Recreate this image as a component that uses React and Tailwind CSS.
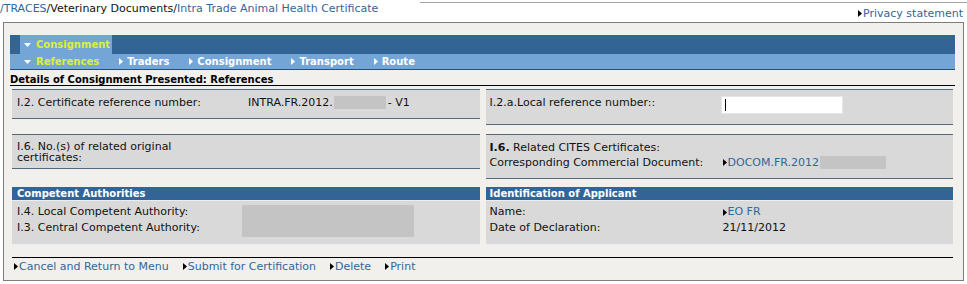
import React from "react";

const Arrow = ({ color = "#000", className = "" }) => (
  <svg width="4" height="7" viewBox="0 0 4 7" className={className}>
    <path d="M0 0L4 3.5L0 7Z" fill={color} />
  </svg>
);

const Down = ({ color = "#fff", className = "" }) => (
  <svg width="7" height="4" viewBox="0 0 7 4" className={className}>
    <path d="M0 0L7 0L3.5 4Z" fill={color} />
  </svg>
);

const Link = ({ children, className = "" }) => (
  <span className={`flex items-center text-[#336699] ${className}`}>
    <Arrow className="mr-[1px]" />
    {children}
  </span>
);

const Blur = ({ className = "" }) => (
  <span className={`block bg-[#c4c4c4] ${className}`} />
);

const navItems = ["Traders", "Consignment", "Transport", "Route"];

const App = () => {
  return (
    <div className="w-[967px] h-[284px] bg-white overflow-hidden font-['DejaVu_Sans',sans-serif] text-[11px] leading-[13px] text-[#111]">
      {/* top strip */}
      <div className="h-[22px] flex flex-col">
        <div className="h-[3px] ml-[420px] border-b border-[#a3a3a3]" />
        <div className="flex justify-between items-start">
          <div className="leading-[12px]">
            <span className="text-[#336699]">/TRACES</span>
            <span>/Veterinary Documents/</span>
            <span className="text-[#336699]">Intra Trade Animal Health Certificate</span>
          </div>
          <div className="mt-[4px] mr-[4px] flex items-center text-[#336699]">
            <Arrow className="mr-[1px]" />
            Privacy statement
          </div>
        </div>
      </div>

      {/* main panel */}
      <div className="mx-[3px] h-[259px] border border-[#7d7d7d] bg-[#f1f0ed] pl-[6px] pr-[8px] pt-[12px]">
        {/* tabs */}
        <div className="h-[19px] bg-[#326496] pl-[10px] flex">
          <div className="w-[92px] bg-[#73a6d6] flex items-center pl-[4px] text-[10px] font-bold text-[#ddf035]">
            <Down className="mr-[5px]" />
            Consignment
          </div>
        </div>
        <div className="h-[16px] bg-[#73a6d6] border-b border-[#2a4e72] flex items-center pl-[14px] gap-[20px] text-[10px] font-bold text-white">
          <span className="flex items-center text-[#ddf035]">
            <Down className="mr-[5px]" />
            References
          </span>
          {navItems.map((item) => (
            <span key={item} className="flex items-center">
              <Arrow color="#fff" className="mr-[4px]" />
              {item}
            </span>
          ))}
        </div>

        {/* title */}
        <div className="h-[16px] border-b border-black pt-[4px] leading-[11px] text-[10px] font-bold text-black">
          Details of Consignment Presented: References
        </div>

        {/* sections */}
        <div className="mx-[2px] mt-[3px] grid grid-cols-2 gap-x-[6px] items-start">
          {/* row 1 */}
          <div className="h-[30px] bg-[#d9d9d9] border-y border-[#536a7e] flex pl-[5px] pt-[6px]">
            <span className="w-[231px]">I.2. Certificate reference number:</span>
            <span className="flex items-start">
              INTRA.FR.2012.
              <Blur className="w-[52px] h-[13px] ml-[1px] mr-[2px]" />
              - V1
            </span>
          </div>
          <div className="h-[36px] bg-[#d9d9d9] border-y border-[#536a7e] flex pl-[4px] pt-[6px]">
            <span className="w-[231px]">I.2.a.Local reference number::</span>
            <span className="w-[122px] h-[18px] bg-white border border-[#e6e6e6] flex items-center pl-[3px]">
              <span className="w-[1px] h-[12px] bg-black" />
            </span>
          </div>

          {/* row 2 */}
          <div className="mt-[9px] h-[35px] bg-[#d9d9d9] border-y border-[#536a7e] pl-[5px] pt-[6px] leading-[11px]">
            <div className="w-[200px]">I.6. No.(s) of related original certificates:</div>
          </div>
          <div className="mt-[9px] h-[45px] bg-[#d9d9d9] border-y border-[#536a7e] pl-[4px] pt-[6px]">
            <div>
              <span className="font-bold">I.6.</span> Related CITES Certificates:
            </div>
            <div className="flex mt-[2px]">
              <span className="w-[233px]">Corresponding Commercial Document:</span>
              <Link>DOCOM.FR.2012</Link>
              <Blur className="w-[66px] h-[13px] ml-[1px]" />
            </div>
          </div>

          {/* row 3 */}
          <div className="mt-[8px]">
            <div className="h-[13px] bg-[#326496] text-white font-bold text-[10px] leading-[13px] pl-[5px]">
              Competent Authorities
            </div>
            <div className="h-[45px] bg-[#d9d9d9] border-t border-[#e9eef3] border-b border-[#536a7e] flex pl-[5px]">
              <div className="w-[225px] pt-[3px] leading-[16px]">
                <div>I.4. Local Competent Authority:</div>
                <div>I.3. Central Competent Authority:</div>
              </div>
              <Blur className="w-[172px] h-[32px] mt-[4px]" />
            </div>
          </div>
          <div className="mt-[8px]">
            <div className="h-[13px] bg-[#326496] text-white font-bold text-[10px] leading-[13px] pl-[4px]">
              Identification of Applicant
            </div>
            <div className="h-[45px] bg-[#d9d9d9] border-t border-[#e9eef3] border-b border-[#536a7e] pl-[4px] pt-[3px] leading-[16px]">
              <div className="flex">
                <span className="w-[233px]">Name:</span>
                <Link>EO FR</Link>
              </div>
              <div className="flex">
                <span className="w-[233px]">Date of Declaration:</span>
                <span>21/11/2012</span>
              </div>
            </div>
          </div>
        </div>

        {/* actions */}
        <div className="mx-[2px] mt-[12px] border-t border-black pt-[2px] pl-[2px] flex gap-[14px]">
          <Link>Cancel and Return to Menu</Link>
          <Link>Submit for Certification</Link>
          <Link>Delete</Link>
          <Link>Print</Link>
        </div>
      </div>
    </div>
  );
};

export default App;
